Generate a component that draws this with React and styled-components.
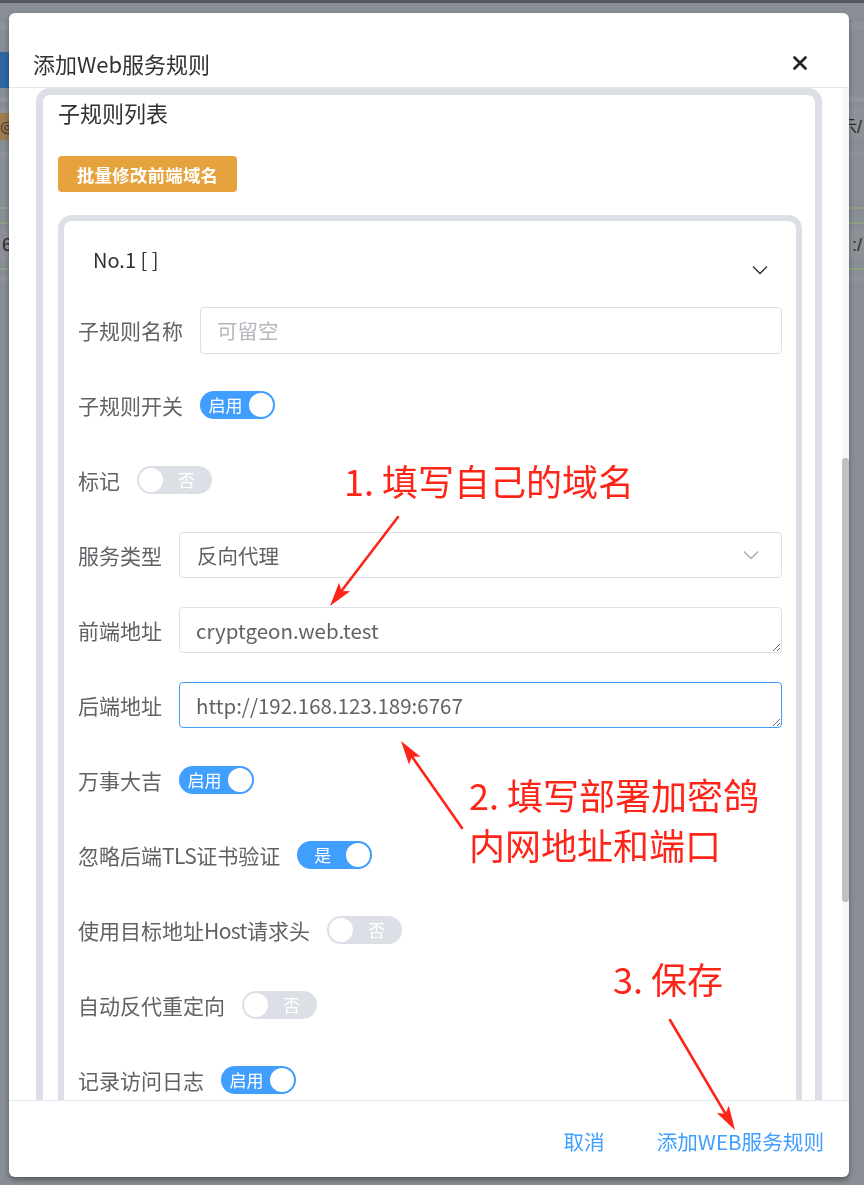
import React from 'react';
import styled, { createGlobalStyle } from 'styled-components';

const Global = createGlobalStyle`
  html, body { margin: 0; padding: 0; }
  body {
    width: 864px; height: 1185px; overflow: hidden;
    background: #898d94;
    font-family: "Noto Sans CJK SC", "Noto Sans", sans-serif;
  }
  * { box-sizing: border-box; }
`;

/* ---------- dimmed page behind the dialog ---------- */
const BackPage = styled.div`
  display: flex; flex-direction: column; height: 1185px;
`;
const Strip = styled.div`
  height: ${p => p.$h}px;
  background: ${p => p.$bg || '#898d94'};
  display: flex; align-items: center; justify-content: space-between;
  color: #2a2c30; font-size: 18px; font-family: "Liberation Sans", sans-serif;
`;
const Tab = styled.div`
  width: 12px; height: 100%; background: ${p => p.$c};
  display: flex; align-items: center; font-size: 16px; color: #333;
`;
const Edge = styled.span`
  padding: 0 2px; font-size: 18px; color: #2a2c30;
`;

/* ---------- dialog ---------- */
const Overlay = styled.div`
  position: fixed; inset: 0;
  padding: 13px 0 0 9px;
`;
const Dialog = styled.div`
  width: 840px; height: 1164px;
  background: #fff; border-radius: 6px;
  box-shadow: 0 3px 5px rgba(0, 0, 0, 0.35);
  display: flex; flex-direction: column; overflow: hidden;
`;
const Header = styled.div`
  flex: 0 0 75px;
  padding: 36px 42px 0 24px;
  display: flex; justify-content: space-between; align-items: flex-start;
  border-bottom: 1px solid #e4e7ed;
`;
const Title = styled.div`
  font-size: 22px; line-height: 28px; color: #303133;
`;
const CloseBtn = styled.span`
  height: 28px; display: flex; align-items: center;
`;
const Body = styled.div`
  flex: 0 0 1012px; height: 1012px;
  display: flex; padding-left: 27px; overflow: hidden;
`;
const Content = styled.div`
  flex: 0 0 786px; display: flex; flex-direction: column; align-items: stretch;
`;
const Track = styled.div`
  flex: 0 0 7px; margin-left: 20px; background: #f7f7f7;
  display: flex; flex-direction: column;
`;
const Thumb = styled.div`
  margin-top: 370px; height: 444px; border-radius: 4px; background: #c0c0c0;
`;
const OuterCard = styled.div`
  border: 7px solid #dcdfe6; border-radius: 14px;
  padding: 2px 13px 0 15px;
`;
const CardTitle = styled.div`
  font-size: 22px; line-height: 30px; color: #303133;
`;
const BatchButton = styled.button`
  margin-top: 29px; width: 179px; height: 36px;
  border: none; border-radius: 4px; background: #e6a23c; color: #fff;
  font-family: inherit; font-size: 17.5px; font-weight: 600; letter-spacing: 0.2px;
  display: flex; align-items: center; justify-content: center; padding: 0;
`;
const InnerCard = styled.div`
  margin-top: 23px;
  border: 6px solid #dcdfe6; border-radius: 14px;
  padding: 0 14px 80px 14px;
`;
const AccHeader = styled.div`
  height: 57px; padding: 25px 14px 0 15px;
  display: flex; justify-content: space-between; align-items: flex-start;
`;
const AccTitle = styled.div`
  font-size: 20px; line-height: 28px; color: #303133; white-space: pre;
`;
const Chevron = styled.svg`
  margin-top: 19px; display: block;
`;
const Form = styled.div`
  margin-top: 29px; display: flex; flex-direction: column; gap: 29px;
`;
const Row = styled.div`
  height: 46px; display: flex; align-items: center; gap: 17px;
`;
const Label = styled.span`
  font-size: 21px; line-height: 28px; color: #606266; white-space: nowrap;
`;
const Latin = styled.span`
  letter-spacing: -0.6px;
`;
const TextInput = styled.input`
  flex: 1; height: 47px; border: 1px solid #dcdfe6; border-radius: 4px;
  padding: 0 16px; font-family: inherit; font-size: 20.5px; color: #606266;
  outline: none; background: #fff;
  &::placeholder { color: #b4b7bd; }
`;
const SelectBox = styled.div`
  flex: 1; height: 46px; border: 1px solid #dcdfe6; border-radius: 4px;
  padding: 0 22px 0 17px; display: flex; align-items: center; justify-content: space-between;
  font-size: 20.5px; color: #606266;
`;
const Area = styled.textarea`
  flex: 1; height: 46px; border: 1px solid ${p => (p.$focus ? '#409eff' : '#dcdfe6')};
  border-radius: 4px; padding: 8px 16px; resize: vertical;
  font-family: inherit; font-size: 20.5px; line-height: 28px; color: #606266;
  outline: none; background: #fff; overflow: hidden;
`;
const SwitchTrack = styled.span`
  width: 75px; height: 28px; border-radius: 14px; padding: 2px;
  display: inline-flex; align-items: center;
  flex-direction: ${p => (p.$on ? 'row' : 'row-reverse')};
  background: ${p => (p.$on ? '#409eff' : '#dcdfe6')};
`;
const SwitchText = styled.span`
  flex: 1; text-align: center; color: #fff; font-size: 17px; line-height: 24px;
`;
const Knob = styled.span`
  flex: 0 0 24px; height: 24px; border-radius: 50%; background: #fff;
`;
const Footer = styled.div`
  flex: 0 0 77px; border-top: 1px solid #e4e7ed;
  display: flex; justify-content: flex-end; align-items: flex-start;
  padding: 26px 25px 0 0; gap: 52px;
`;
const LinkButton = styled.button`
  border: none; background: none; padding: 0; cursor: pointer;
  font-family: inherit; font-size: 20.6px; line-height: 28px; color: #409eff;
`;

/* ---------- annotations over the screenshot ---------- */
const AnnotLayer = styled.div`
  position: fixed; inset: 0; pointer-events: none;
`;
const Note = styled.div`
  position: absolute; left: ${p => p.$x}px; top: ${p => p.$y}px;
  color: #ff2418; font-size: 36px; line-height: ${p => p.$lh || 44}px; white-space: nowrap;
`;

const Switch = ({ on, text }) => (
  <SwitchTrack $on={on}>
    <SwitchText>{text}</SwitchText>
    <Knob />
  </SwitchTrack>
);

function Arrow({ x1, y1, x2, y2 }) {
  const dx = x2 - x1, dy = y2 - y1;
  const len = Math.hypot(dx, dy);
  const ux = dx / len, uy = dy / len;
  const nx = -uy, ny = ux;
  const L = 24, W = 7;
  const bx = x2 - ux * L, by = y2 - uy * L;
  const nxp = x2 - ux * (L - 5), nyp = y2 - uy * (L - 5);
  const pts = `${x2},${y2} ${bx + nx * W},${by + ny * W} ${nxp},${nyp} ${bx - nx * W},${by - ny * W}`;
  return (
    <g>
      <line x1={x1} y1={y1} x2={x2 - ux * 12} y2={y2 - uy * 12} stroke="#ff2418" strokeWidth="2.6" strokeLinecap="round" />
      <polygon points={pts} fill="#ff2418" />
    </g>
  );
}

const strips = [
  { h: 3, bg: '#55595f' },
  { h: 19 },
  { h: 8, bg: '#8e9299' },
  { h: 22 },
  { h: 36, left: '#2e66a2' },
  { h: 9 },
  { h: 5, bg: '#92969c' },
  { h: 6 },
  { h: 5, bg: '#8f9399' },
  { h: 27, bg: '#8d9197', left: '#9d7c4d', leftText: '◎', right: '示/' },
  { h: 12 },
  { h: 5, bg: '#8f9399' },
  { h: 50 },
  { h: 2, bg: '#8fa088' },
  { h: 13 },
  { h: 2, bg: '#8fa088' },
  { h: 6 },
  { h: 30, bg: '#8d9197', leftLabel: '6', right: ':/' },
  { h: 8 },
  { h: 2, bg: '#8fa088' },
  { h: 6 },
  { h: 5, bg: '#8f9399' },
];

export default function App() {
  return (
    <>
      <Global />
      <BackPage>
        {strips.map((s, i) => (
          <Strip key={i} $h={s.h} $bg={s.bg}>
            {s.left ? <Tab $c={s.left}>{s.leftText || ''}</Tab> : s.leftLabel ? <Edge>{s.leftLabel}</Edge> : <span />}
            {s.right ? <Edge>{s.right}</Edge> : <span />}
          </Strip>
        ))}
      </BackPage>

      <Overlay>
        <Dialog>
          <Header>
            <Title>添加Web服务规则</Title>
            <CloseBtn>
              <svg width="14" height="14" viewBox="0 0 14 14">
                <path d="M1.5 1.5 L12.5 12.5 M12.5 1.5 L1.5 12.5" stroke="#1f2023" strokeWidth="2.6" strokeLinecap="round" />
              </svg>
            </CloseBtn>
          </Header>

          <Body>
            <Content>
              <OuterCard>
                <CardTitle>子规则列表</CardTitle>
                <BatchButton>批量修改前端域名</BatchButton>
                <InnerCard>
                  <AccHeader>
                    <AccTitle>No.1 [ ]</AccTitle>
                    <Chevron width="16" height="10" viewBox="0 0 16 10">
                      <path d="M1 1.5 L8 8.5 L15 1.5" fill="none" stroke="#303133" strokeWidth="1.4" />
                    </Chevron>
                  </AccHeader>
                  <Form>
                    <Row>
                      <Label>子规则名称</Label>
                      <TextInput placeholder="可留空" readOnly />
                    </Row>
                    <Row>
                      <Label>子规则开关</Label>
                      <Switch on text="启用" />
                    </Row>
                    <Row>
                      <Label>标记</Label>
                      <Switch text="否" />
                    </Row>
                    <Row>
                      <Label>服务类型</Label>
                      <SelectBox>
                        <span>反向代理</span>
                        <svg width="16" height="10" viewBox="0 0 16 10">
                          <path d="M1 1.5 L8 8.5 L15 1.5" fill="none" stroke="#a8abb2" strokeWidth="1.3" />
                        </svg>
                      </SelectBox>
                    </Row>
                    <Row>
                      <Label>前端地址</Label>
                      <Area defaultValue="cryptgeon.web.test" rows={1} />
                    </Row>
                    <Row>
                      <Label>后端地址</Label>
                      <Area $focus defaultValue="http://192.168.123.189:6767" rows={1} />
                    </Row>
                    <Row>
                      <Label>万事大吉</Label>
                      <Switch on text="启用" />
                    </Row>
                    <Row>
                      <Label>忽略后端<Latin>TLS</Latin>证书验证</Label>
                      <Switch on text="是" />
                    </Row>
                    <Row>
                      <Label>使用目标地址<Latin>Host</Latin>请求头</Label>
                      <Switch text="否" />
                    </Row>
                    <Row>
                      <Label>自动反代重定向</Label>
                      <Switch text="否" />
                    </Row>
                    <Row>
                      <Label>记录访问日志</Label>
                      <Switch on text="启用" />
                    </Row>
                  </Form>
                </InnerCard>
              </OuterCard>
            </Content>
            <Track>
              <Thumb />
            </Track>
          </Body>

          <Footer>
            <LinkButton>取消</LinkButton>
            <LinkButton>添加WEB服务规则</LinkButton>
          </Footer>
        </Dialog>
      </Overlay>

      <AnnotLayer>
        <svg width="864" height="1185" viewBox="0 0 864 1185" style={{ position: 'absolute', left: 0, top: 0 }}>
          <Arrow x1={398} y1={517} x2={330} y2={606} />
          <Arrow x1={462} y1={828} x2={401} y2={741} />
          <Arrow x1={670} y1={1020} x2={735} y2={1130} />
        </svg>
        <Note $x={344} $y={458}>1. 填写自己的域名</Note>
        <Note $x={469} $y={769} $lh={50}>
          2. 填写部署加密鸽
          <br />
          内网地址和端口
        </Note>
        <Note $x={613} $y={956}>3. 保存</Note>
      </AnnotLayer>
    </>
  );
}
